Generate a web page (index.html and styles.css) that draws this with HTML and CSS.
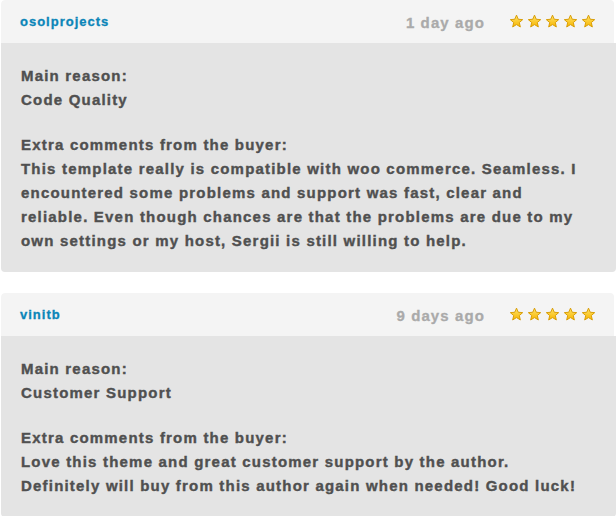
FILE: index.html
```html
<!DOCTYPE html>
<html lang="en">
<head>
    <meta charset="UTF-8">
    <title>Reviews</title>
    <link rel="stylesheet" href="styles.css">
</head>
<body>
    <div class="reviews">
        <!-- Review 1 -->
        <div class="review">
            <div class="review-head">
                <a class="buyer" href="#">osolprojects</a>
                <span class="date">1 day ago</span>
                <span class="stars">
                    <svg class="star" viewBox="0 0 16 16"><use href="#star"/></svg>
                    <svg class="star" viewBox="0 0 16 16"><use href="#star"/></svg>
                    <svg class="star" viewBox="0 0 16 16"><use href="#star"/></svg>
                    <svg class="star" viewBox="0 0 16 16"><use href="#star"/></svg>
                    <svg class="star" viewBox="0 0 16 16"><use href="#star"/></svg>
                </span>
            </div>
            <div class="review-body">
                <p>Main reason:<br>Code Quality</p>
                <p>Extra comments from the buyer:<br>This template really is compatible with woo commerce. Seamless. I encountered some problems and support was fast, clear and reliable. Even though chances are that the problems are due to my own settings or my host, Sergii is still willing to help.</p>
            </div>
        </div>

        <!-- Review 2 -->
        <div class="review">
            <div class="review-head">
                <a class="buyer" href="#">vinitb</a>
                <span class="date">9 days ago</span>
                <span class="stars">
                    <svg class="star" viewBox="0 0 16 16"><use href="#star"/></svg>
                    <svg class="star" viewBox="0 0 16 16"><use href="#star"/></svg>
                    <svg class="star" viewBox="0 0 16 16"><use href="#star"/></svg>
                    <svg class="star" viewBox="0 0 16 16"><use href="#star"/></svg>
                    <svg class="star" viewBox="0 0 16 16"><use href="#star"/></svg>
                </span>
            </div>
            <div class="review-body">
                <p>Main reason:<br>Customer Support</p>
                <p>Extra comments from the buyer:<br>Love this theme and great customer support by the author.<br>Definitely will buy from this author again when needed! Good luck!</p>
            </div>
        </div>
    </div>

    <svg width="0" height="0" class="defs">
        <defs>
            <linearGradient id="gold" x1="0" y1="0" x2="0" y2="1">
                <stop offset="0" stop-color="#ffe46a"/>
                <stop offset="1" stop-color="#f7b500"/>
            </linearGradient>
            <path id="star" d="M8 1.2 L9.9 5.6 L14.6 6 L11 9.1 L12.1 13.8 L8 11.3 L3.9 13.8 L5 9.1 L1.4 6 L6.1 5.6 Z" fill="url(#gold)" stroke="#d69a00" stroke-width="1" stroke-linejoin="round"/>
        </defs>
    </svg>
</body>
</html>
```

FILE: styles.css
```css
body {
    margin: 0;
    background-color: #fff;
    font-family: 'Liberation Sans', Arial, sans-serif;
    color: #505050;
}

.defs {
    position: absolute;
}

.reviews {
    display: flex;
    flex-direction: column;
    gap: 21px;
    padding-left: 1px;
}

.review {
    border-radius: 4px;
    overflow: hidden;
}

.review-head {
    display: flex;
    align-items: center;
    height: 43px;
    padding: 0 18px 0 19px;
    margin-right: 2px;
    background-color: #f4f4f4;
    border-radius: 4px 4px 0 0;
}

.buyer {
    flex: 1;
    color: #0a85b8;
    font-size: 13px;
    font-weight: bold;
    letter-spacing: 1px;
    -webkit-text-stroke: 0.3px #0a85b8;
    text-decoration: none;
    margin-top: -1px;
}

.date {
    color: #aaa;
    font-size: 15px;
    font-weight: bold;
    letter-spacing: 1.1px;
    -webkit-text-stroke: 0.3px #aaa;
    margin-right: 24px;
    margin-top: 1px;
}

.stars {
    display: flex;
    gap: 3px;
}

.star {
    width: 15px;
    height: 15px;
    display: block;
}

.review-body {
    background-color: #e4e4e4;
    padding: 21px 28px 19px 20px;
}

.review-body p {
    margin: 0 0 21px;
    font-size: 15px;
    font-weight: bold;
    line-height: 24px;
    letter-spacing: 1.2px;
    -webkit-text-stroke: 0.4px #505050;
}

.review-body p:last-child {
    margin-bottom: 0;
}
```
